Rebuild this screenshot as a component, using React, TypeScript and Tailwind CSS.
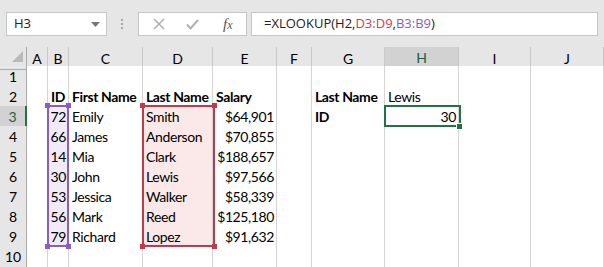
import React from "react";

const cols = ["A", "B", "C", "D", "E", "F", "G", "H", "I", "J"];

type Cell = { t?: string; b?: boolean; r?: boolean };

const data: Record<number, Record<string, Cell>> = {
  2: {
    B: { t: "ID", b: true },
    C: { t: "First Name", b: true },
    D: { t: "Last Name", b: true },
    E: { t: "Salary", b: true },
    G: { t: "Last Name", b: true },
    H: { t: "Lewis" },
  },
  3: { B: { t: "72", r: true }, C: { t: "Emily" }, D: { t: "Smith" }, E: { t: "$64,901", r: true }, G: { t: "ID", b: true }, H: { t: "30", r: true } },
  4: { B: { t: "66", r: true }, C: { t: "James" }, D: { t: "Anderson" }, E: { t: "$70,855", r: true } },
  5: { B: { t: "14", r: true }, C: { t: "Mia" }, D: { t: "Clark" }, E: { t: "$188,657", r: true } },
  6: { B: { t: "30", r: true }, C: { t: "John" }, D: { t: "Lewis" }, E: { t: "$97,566", r: true } },
  7: { B: { t: "53", r: true }, C: { t: "Jessica" }, D: { t: "Walker" }, E: { t: "$58,339", r: true } },
  8: { B: { t: "56", r: true }, C: { t: "Mark" }, D: { t: "Reed" }, E: { t: "$125,180", r: true } },
  9: { B: { t: "79", r: true }, C: { t: "Richard" }, D: { t: "Lopez" }, E: { t: "$91,632", r: true } },
};

const gridCols = "grid grid-cols-[27px_21px_21px_74px_70px_64px_35px_73px_74px_72px_73px]";

function fillFor(col: string, row: number) {
  if (row >= 3 && row <= 9) {
    if (col === "B") return "bg-[#f0ebf7]";
    if (col === "D") return "bg-[#fbe9ea]";
  }
  return "bg-white";
}

export default function App() {
  return (
    <div className="relative w-[604px] h-[267px] overflow-hidden bg-[#e6e6e6] font-['Lato','Liberation_Sans',sans-serif] text-black">
      {/* formula bar */}
      <div className="h-[47px] flex items-start pt-[12px] pl-[6px]">
        <div className="w-[101px] h-[24px] bg-white border border-[#c6c6c6] flex items-center pl-[7px] pr-[6px] justify-between">
          <span className="text-[13px] font-['Open_Sans',sans-serif] text-[#222]">H3</span>
          <svg width="9" height="5" viewBox="0 0 9 5"><path d="M0 0h9L4.5 5z" fill="#777" /></svg>
        </div>
        <div className="w-[31px] flex justify-center pt-[7px]">
          <svg width="3" height="11" viewBox="0 0 3 11">
            <rect x="0" y="0" width="2" height="2" fill="#a6a6a6" />
            <rect x="0" y="4" width="2" height="2" fill="#a6a6a6" />
            <rect x="0" y="8" width="2" height="2" fill="#a6a6a6" />
          </svg>
        </div>
        <div className="w-[109px] h-[24px] bg-white border border-[#c6c6c6] flex items-center">
          <svg className="ml-[14px]" width="12" height="12" viewBox="0 0 12 12">
            <path d="M1 1L11 11M11 1L1 11" stroke="#b0b0b0" strokeWidth="1.6" />
          </svg>
          <svg className="ml-[21px]" width="13" height="11" viewBox="0 0 13 11">
            <path d="M1 5.5L4.5 9.5L12 1" stroke="#b0b0b0" strokeWidth="2" fill="none" />
          </svg>
          <span className="ml-[24px] text-[15px] italic font-['Liberation_Serif',serif] text-[#555] leading-none">
            f<span className="text-[12px]">x</span>
          </span>
        </div>
        <div className="ml-[4px] w-[347px] h-[24px] bg-white border border-[#c6c6c6] flex items-center pl-[12px] text-[13px] font-['Open_Sans',sans-serif] text-[#222]">
          <span>=XLOOKUP(H2,</span>
          <span className="text-[#d03a48]">D3:D9</span>
          <span>,</span>
          <span className="text-[#8a5cc4]">B3:B9</span>
          <span>)</span>
        </div>
      </div>

      {/* column headers */}
      <div className={`${gridCols} h-[19px]`}>
        <div className="relative border-r border-b border-[#ababab] bg-[#e6e6e6]">
          <svg className="absolute left-[12px] top-[4px]" width="11" height="11" viewBox="0 0 11 11">
            <path d="M11 0V11H0z" fill="#b9b9b9" />
          </svg>
        </div>
        {cols.map((c) => (
          <div
            key={c}
            className={`flex items-center justify-center text-[14px] border-r border-[#c8c8c8] ${
              c === "H"
                ? "bg-[#d2d2d2] border-b-2 border-b-[#217346] text-[#215e3a]"
                : "bg-[#e6e6e6] border-b border-b-[#ababab]"
            }`}
          >
            {c}
          </div>
        ))}
      </div>

      {/* rows */}
      {Array.from({ length: 10 }, (_, i) => i + 1).map((r) => (
        <div key={r} className={`${gridCols} h-[20px]`}>
          <div
            className={`flex items-center justify-center text-[14px] border-b border-b-[#c8c8c8] ${
              r === 3
                ? "bg-[#d2d2d2] border-r-2 border-r-[#217346] text-[#215e3a]"
                : "bg-[#e6e6e6] border-r border-r-[#ababab]"
            }`}
          >
            {r}
          </div>
          {cols.map((c) => {
            const cell = data[r]?.[c];
            return (
              <div
                key={c}
                className={`border-r border-b border-[#d4d4d4] ${fillFor(c, r)} flex items-center text-[14px] tracking-[-0.4px] whitespace-nowrap overflow-visible ${
                  cell?.r ? "justify-end pr-[2px]" : "pl-[3px]"
                } ${cell?.b ? "font-bold" : ""}`}
              >
                {cell?.t}
              </div>
            );
          })}
        </div>
      ))}

      {/* purple range B3:B9 */}
      <div className="absolute left-[47px] top-[105px] w-[22px] h-[142px] border-2 border-[#8a5cc4]" />
      <div className="absolute left-[45px] top-[103px] w-[5px] h-[5px] bg-[#8a5cc4]" />
      <div className="absolute left-[66px] top-[103px] w-[5px] h-[5px] bg-[#8a5cc4]" />
      <div className="absolute left-[45px] top-[244px] w-[5px] h-[5px] bg-[#8a5cc4]" />
      <div className="absolute left-[66px] top-[244px] w-[5px] h-[5px] bg-[#8a5cc4]" />

      {/* red range D3:D9 */}
      <div className="absolute left-[142px] top-[105px] w-[73px] h-[142px] border-2 border-[#c7374a]" />
      <div className="absolute left-[140px] top-[103px] w-[5px] h-[5px] bg-[#c7374a]" />
      <div className="absolute left-[212px] top-[103px] w-[5px] h-[5px] bg-[#c7374a]" />
      <div className="absolute left-[140px] top-[244px] w-[5px] h-[5px] bg-[#c7374a]" />
      <div className="absolute left-[212px] top-[244px] w-[5px] h-[5px] bg-[#c7374a]" />

      {/* active cell H3 */}
      <div className="absolute left-[384px] top-[105px] w-[77px] h-[22px] border-2 border-[#217346]" />
      <div className="absolute left-[456px] top-[123px] w-[7px] h-[7px] bg-[#217346] border border-white" />
    </div>
  );
}
